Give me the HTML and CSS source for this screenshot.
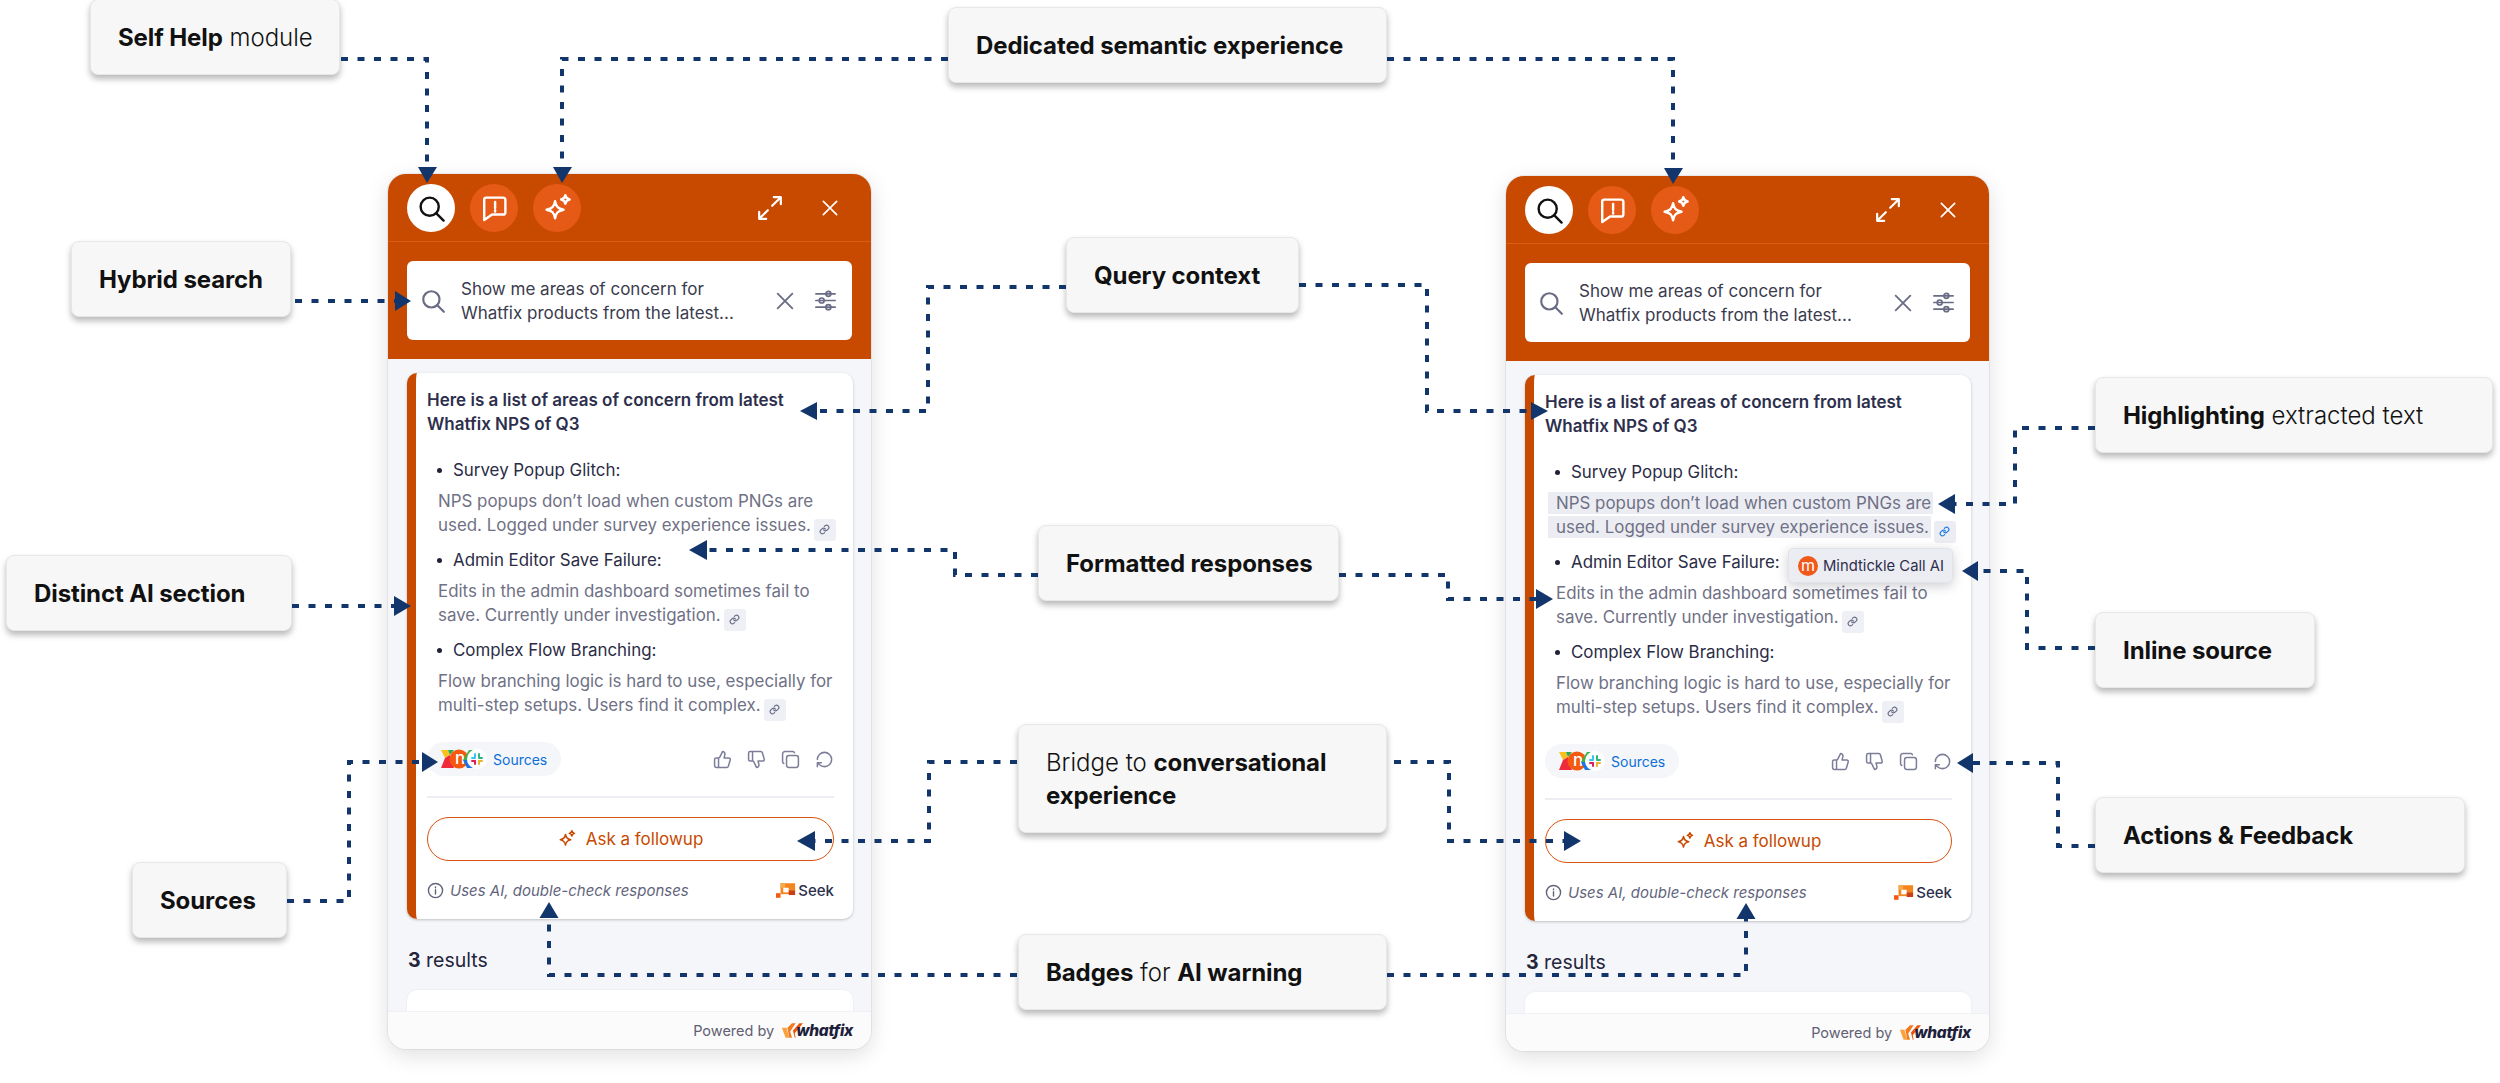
FILE: index.html
```html
<!DOCTYPE html>
<html lang="en">
<head>
    <meta charset="UTF-8">
    <meta name="viewport" content="width=device-width, initial-scale=1.0">
    <title>AI answer annotations</title>
    <link rel="stylesheet" href="styles.css">
</head>
<body>

<!-- shared icons -->
<svg class="icon-defs" aria-hidden="true">
    <symbol id="i-search" viewBox="0 0 24 24"><circle cx="10.5" cy="10.5" r="7.5"/><path d="M16 16l6 6"/></symbol>
    <symbol id="i-bubble" viewBox="0 0 24 24"><path d="M5 3h14a2 2 0 0 1 2 2v10a2 2 0 0 1-2 2H10l-6.500 4.500V4.500A1.500 1.500 0 0 1 5 3z"/><path d="M12.500 6.500v5M12.500 13.500v1"/></symbol>
    <symbol id="i-spark" viewBox="0 0 24 24"><path d="M10 6c.8 4.500 2.500 6.200 7 7-4.500.8-6.200 2.500-7 7-.8-4.500-2.500-6.200-7-7 4.500-.8 6.200-2.500 7-7z"/><path class="solid" d="M18.500 1c.4 2.200 1.300 3.100 3.500 3.500-2.200.4-3.100 1.300-3.500 3.500-.4-2.200-1.300-3.100-3.500-3.500 2.200-.4 3.100-1.300 3.500-3.500z"/></symbol>
    <symbol id="i-expand" viewBox="0 0 24 24"><path d="M14 10l8-8M15.500 2H22v6.500M10 14l-8 8M2 15.500V22h6.500"/></symbol>
    <symbol id="i-close" viewBox="0 0 24 24"><path d="M4 4l16 16M20 4L4 20"/></symbol>
    <symbol id="i-filter" viewBox="0 0 24 24"><path d="M2 5h20M2 12h20M2 19h20"/><circle class="hole" cx="15" cy="5" r="2.600"/><circle class="hole" cx="8" cy="12" r="2.600"/><circle class="hole" cx="15" cy="19" r="2.600"/></symbol>
    <symbol id="i-link" viewBox="0 0 24 24"><path d="M10 13a5 5 0 0 0 7.500.5l3-3a5 5 0 0 0-7-7l-1.700 1.700M14 11a5 5 0 0 0-7.500-.5l-3 3a5 5 0 0 0 7 7l1.700-1.700"/></symbol>
    <symbol id="i-up" viewBox="0 0 24 24"><path d="M7 10v12M15 5.900L14 10h5.800a2 2 0 0 1 1.900 2.600l-2.300 8a2 2 0 0 1-1.900 1.400H4a2 2 0 0 1-2-2v-8a2 2 0 0 1 2-2h2.800a2 2 0 0 0 1.800-1.100L12 2a3.100 3.100 0 0 1 3 3.900z"/></symbol>
    <symbol id="i-down" viewBox="0 0 24 24"><path transform="matrix(1 0 0 -1 0 24)" d="M7 10v12M15 5.900L14 10h5.800a2 2 0 0 1 1.900 2.600l-2.300 8a2 2 0 0 1-1.900 1.400H4a2 2 0 0 1-2-2v-8a2 2 0 0 1 2-2h2.800a2 2 0 0 0 1.800-1.100L12 2a3.100 3.100 0 0 1 3 3.900z"/></symbol>
    <symbol id="i-copy" viewBox="0 0 24 24"><rect x="7" y="7" width="15" height="15" rx="3"/><path d="M17 3.500A2.500 2.500 0 0 0 15 2H5a3 3 0 0 0-3 3v10a2.500 2.500 0 0 0 1.500 2"/></symbol>
    <symbol id="i-redo" viewBox="0 0 24 24"><path transform="matrix(1 0 0 -1 0 24)" d="M3 12a9 9 0 1 0 9-9 9.800 9.800 0 0 0-6.700 2.700L3 8M3 3v5h5"/></symbol>
    <symbol id="i-info" viewBox="0 0 24 24"><circle cx="12" cy="12" r="10"/><path d="M12 11v6M12 7v1"/></symbol>
    <symbol id="i-sources" viewBox="0 0 46 20">
        <polygon fill="#f7c21e" points="0,1 7,1 9,6 4,9"/>
        <polygon fill="#ee2b3b" points="0,19 4,9 9,6 13,19"/>
        <polygon fill="#2fa84f" points="7,1 13,1 9,6"/>
        <circle cx="18" cy="10" r="9.500" fill="#f4590f"/>
        <text class="src-n" x="19" y="15" text-anchor="middle">n</text>
        <polygon fill="#37b24d" points="35,1 28,1 22,11 27,11"/>
        <polygon fill="#1b74e4" points="22,11 27,11 33,19 26,19"/>
        <circle cx="36" cy="10" r="10" fill="#fff"/>
        <rect x="30" y="8" width="5" height="2" rx="1" fill="#36c5f0"/><rect x="33" y="4" width="2" height="5" rx="1" fill="#36c5f0"/>
        <rect x="37" y="4" width="2" height="5" rx="1" fill="#2eb67d"/><rect x="37" y="8" width="5" height="2" rx="1" fill="#2eb67d"/>
        <rect x="37" y="11" width="5" height="2" rx="1" fill="#ecb22e"/><rect x="37" y="11" width="2" height="5" rx="1" fill="#ecb22e"/>
        <rect x="33" y="11" width="2" height="5" rx="1" fill="#e01e5a"/><rect x="30" y="11" width="5" height="2" rx="1" fill="#e01e5a"/>
    </symbol>
    <symbol id="i-seek" viewBox="0 0 22 16">
        <rect x="5" y="0" width="16" height="12" fill="#f4861f"/>
        <rect x="5" y="0" width="5" height="5" fill="#f9a84a"/>
        <rect x="8" y="5" width="6" height="5" fill="#fff"/>
        <rect x="14" y="8" width="7" height="5" fill="#c8401a"/>
        <rect x="0" y="11" width="5" height="5" fill="#f4590f"/>
    </symbol>
    <symbol id="i-wf" viewBox="0 0 24 18">
        <path d="M1 6h5l3 11H5z" fill="#f9a13a"/>
        <path d="M7 6l5-5h4l-6 9 2 7H9z" fill="#f47a1f"/>
        <path d="M13 9l7-8h4l-9 11 1 5h-1z" fill="#e8590c"/>
    </symbol>
</svg>

<div class="canvas">

    <!-- callouts -->
    <div class="note note-selfhelp"><p><b>Self Help</b> module</p></div>
    <div class="note note-dedicated"><p><b>Dedicated semantic experience</b></p></div>
    <div class="note note-hybrid"><p><b>Hybrid search</b></p></div>
    <div class="note note-query"><p><b>Query context</b></p></div>
    <div class="note note-distinct"><p><b>Distinct AI section</b></p></div>
    <div class="note note-formatted"><p><b>Formatted responses</b></p></div>
    <div class="note note-bridge"><p>Bridge to <b>conversational</b><br><b>experience</b></p></div>
    <div class="note note-sources"><p><b>Sources</b></p></div>
    <div class="note note-badges"><p><b>Badges</b> for <b>AI warning</b></p></div>
    <div class="note note-highlight"><p><b>Highlighting</b> extracted text</p></div>
    <div class="note note-inline"><p><b>Inline source</b></p></div>
    <div class="note note-actions"><p><b>Actions &amp; Feedback</b></p></div>

    <!-- left widget -->
    <section class="panel panel-left">
        <div class="panel-nav">
            <span class="tab tab-active"><svg class="ico"><use href="#i-search"/></svg></span>
            <span class="tab"><svg class="ico"><use href="#i-bubble"/></svg></span>
            <span class="tab"><svg class="ico"><use href="#i-spark"/></svg></span>
            <span class="nav-right">
                <svg class="ico ico-expand"><use href="#i-expand"/></svg>
                <svg class="ico ico-close"><use href="#i-close"/></svg>
            </span>
        </div>
        <div class="panel-search">
            <div class="search-box">
                <svg class="ico ico-find"><use href="#i-search"/></svg>
                <p class="query">Show me areas of concern for<br>Whatfix products from the latest...</p>
                <svg class="ico ico-clear"><use href="#i-close"/></svg>
                <svg class="ico ico-filter"><use href="#i-filter"/></svg>
            </div>
        </div>
        <div class="answer">
            <h2 class="answer-title">Here is a list of areas of concern from latest<br>Whatfix NPS of Q3</h2>
            <ul class="answer-list">
                <li>
                    <h3>Survey Popup Glitch:</h3>
                    <p>NPS popups don’t load when custom PNGs are<br>used. Logged under survey experience issues.<span class="chip"><svg class="ico"><use href="#i-link"/></svg></span></p>
                </li>
                <li>
                    <h3>Admin Editor Save Failure:</h3>
                    <p>Edits in the admin dashboard sometimes fail to<br>save. Currently under investigation.<span class="chip"><svg class="ico"><use href="#i-link"/></svg></span></p>
                </li>
                <li>
                    <h3>Complex Flow Branching:</h3>
                    <p>Flow branching logic is hard to use, especially for<br>multi-step setups. Users find it complex.<span class="chip"><svg class="ico"><use href="#i-link"/></svg></span></p>
                </li>
            </ul>
            <div class="answer-tools">
                <span class="sources-pill"><svg class="src-logos"><use href="#i-sources"/></svg>Sources</span>
                <span class="tools">
                    <svg class="ico"><use href="#i-up"/></svg>
                    <svg class="ico"><use href="#i-down"/></svg>
                    <svg class="ico"><use href="#i-copy"/></svg>
                    <svg class="ico"><use href="#i-redo"/></svg>
                </span>
            </div>
            <hr class="answer-line">
            <button class="followup"><svg class="ico"><use href="#i-spark"/></svg>Ask a followup</button>
            <div class="answer-foot">
                <svg class="ico ico-info"><use href="#i-info"/></svg>
                <em>Uses AI, double-check responses</em>
                <span class="seek"><svg class="seek-logo"><use href="#i-seek"/></svg>Seek</span>
            </div>
        </div>
        <p class="results"><b>3</b> results</p>
        <div class="result-stub"></div>
        <div class="panel-foot">Powered by<span class="wf"><svg class="wf-logo"><use href="#i-wf"/></svg><i>whatfix</i></span></div>
    </section>

    <!-- right widget, same thing with the highlight and source popup open -->
    <section class="panel panel-right">
        <div class="panel-nav">
            <span class="tab tab-active"><svg class="ico"><use href="#i-search"/></svg></span>
            <span class="tab"><svg class="ico"><use href="#i-bubble"/></svg></span>
            <span class="tab"><svg class="ico"><use href="#i-spark"/></svg></span>
            <span class="nav-right">
                <svg class="ico ico-expand"><use href="#i-expand"/></svg>
                <svg class="ico ico-close"><use href="#i-close"/></svg>
            </span>
        </div>
        <div class="panel-search">
            <div class="search-box">
                <svg class="ico ico-find"><use href="#i-search"/></svg>
                <p class="query">Show me areas of concern for<br>Whatfix products from the latest...</p>
                <svg class="ico ico-clear"><use href="#i-close"/></svg>
                <svg class="ico ico-filter"><use href="#i-filter"/></svg>
            </div>
        </div>
        <div class="answer">
            <h2 class="answer-title">Here is a list of areas of concern from latest<br>Whatfix NPS of Q3</h2>
            <ul class="answer-list">
                <li>
                    <h3>Survey Popup Glitch:</h3>
                    <p><span class="hl">NPS popups don’t load when custom PNGs are</span><br><span class="hl">used. Logged under survey experience issues.</span><span class="chip chip-on"><svg class="ico"><use href="#i-link"/></svg></span></p>
                </li>
                <li>
                    <h3>Admin Editor Save Failure:</h3>
                    <p>Edits in the admin dashboard sometimes fail to<br>save. Currently under investigation.<span class="chip"><svg class="ico"><use href="#i-link"/></svg></span></p>
                </li>
                <li>
                    <h3>Complex Flow Branching:</h3>
                    <p>Flow branching logic is hard to use, especially for<br>multi-step setups. Users find it complex.<span class="chip"><svg class="ico"><use href="#i-link"/></svg></span></p>
                </li>
            </ul>
            <div class="answer-tools">
                <span class="sources-pill"><svg class="src-logos"><use href="#i-sources"/></svg>Sources</span>
                <span class="tools">
                    <svg class="ico"><use href="#i-up"/></svg>
                    <svg class="ico"><use href="#i-down"/></svg>
                    <svg class="ico"><use href="#i-copy"/></svg>
                    <svg class="ico"><use href="#i-redo"/></svg>
                </span>
            </div>
            <hr class="answer-line">
            <button class="followup"><svg class="ico"><use href="#i-spark"/></svg>Ask a followup</button>
            <div class="answer-foot">
                <svg class="ico ico-info"><use href="#i-info"/></svg>
                <em>Uses AI, double-check responses</em>
                <span class="seek"><svg class="seek-logo"><use href="#i-seek"/></svg>Seek</span>
            </div>
            <div class="source-pop"><span class="mt-badge">m</span>Mindtickle Call AI</div>
        </div>
        <p class="results"><b>3</b> results</p>
        <div class="result-stub"></div>
        <div class="panel-foot">Powered by<span class="wf"><svg class="wf-logo"><use href="#i-wf"/></svg><i>whatfix</i></span></div>
    </section>

    <!-- connectors -->
    <svg class="wires" viewBox="0 0 2500 1083">
        <path d="M341 59H427V170"/>
        <path d="M948 59H562V170"/>
        <path d="M1387 59H1673V172"/>
        <path d="M295 301H398"/>
        <path d="M1066 287H928V411H815"/>
        <path d="M1299 285H1427V411H1538"/>
        <path d="M292 606H398"/>
        <path d="M1038 575H955V550H705"/>
        <path d="M1339 575H1448V599H1540"/>
        <path d="M1017 762H929V841H812"/>
        <path d="M1394 762H1449V841H1568"/>
        <path d="M287 901H349V762H425"/>
        <path d="M1017 975H549V915"/>
        <path d="M1387 975H1746V917"/>
        <path d="M2095 428H2015V504H1952"/>
        <path d="M2095 648H2027V571H1975"/>
        <path d="M2095 846H2058V763H1970"/>

        <polygon points="427,183 418,167 437,167"/>
        <polygon points="562,183 553,167 572,167"/>
        <polygon points="1673,184 1664,168 1683,168"/>
        <polygon points="411,301 395,291 395,311"/>
        <polygon points="800,411 817,402 817,420"/>
        <polygon points="1548,411 1531,402 1531,420"/>
        <polygon points="411,606 394,596 394,616"/>
        <polygon points="689,550 707,540 707,560"/>
        <polygon points="1553,599 1536,589 1536,609"/>
        <polygon points="797,841 815,831 815,851"/>
        <polygon points="1581,841 1564,831 1564,851"/>
        <polygon points="438,762 422,752 422,772"/>
        <polygon points="549,902 539.500,918 558.500,918"/>
        <polygon points="1746,903 1736.500,919 1755.500,919"/>
        <polygon points="1938,504 1955,494 1955,514"/>
        <polygon points="1962,571 1978,561 1978,581"/>
        <polygon points="1957,763 1973,753 1973,773"/>
    </svg>
</div>

</body>
</html>
```

FILE: styles.css
```css
* {
  margin: 0;
  padding: 0;
  box-sizing: border-box;
}

body {
  background: #fff;
  font-family: "Inter", "Noto Sans", sans-serif;
  color: #1f2138;
  overflow: hidden;
}

.icon-defs {
  display: none;
}

.canvas {
  position: relative;
  width: 2500px;
  height: 1083px;
  overflow: hidden;
}

/* callouts, placed freely round the widgets */
.note {
  position: absolute;
  display: flex;
  align-items: center;
  height: 76px;
  padding: 0 0 0 27px;
  background: #f7f7f7;
  border: 1px solid #e7e7e7;
  border-radius: 8px;
  box-shadow: 0 4px 6px rgba(0, 0, 0, .28);
  font-size: 24px;
  font-weight: 300;
  line-height: 33px;
  color: #111;
  white-space: nowrap;
}

.note b {
  font-weight: 700;
  letter-spacing: -.1px;
}

.note-selfhelp { left: 90px; top: -1px; width: 250px; }
.note-dedicated { left: 948px; top: 7px; width: 439px; }
.note-hybrid { left: 71px; top: 241px; width: 220px; }
.note-query { left: 1066px; top: 237px; width: 233px; }
.note-distinct { left: 6px; top: 555px; width: 286px; }
.note-formatted { left: 1038px; top: 525px; width: 301px; }
.note-bridge { left: 1018px; top: 724px; width: 369px; height: 109px; }
.note-sources { left: 132px; top: 862px; width: 155px; }
.note-badges { left: 1018px; top: 934px; width: 369px; }
.note-highlight { left: 2095px; top: 377px; width: 398px; }
.note-inline { left: 2095px; top: 612px; width: 220px; }
.note-actions { left: 2095px; top: 797px; width: 370px; }

/* widget */
.panel {
  position: absolute;
  top: 174px;
  display: flex;
  flex-direction: column;
  width: 483px;
  height: 875px;
  overflow: hidden;
  background: #f5f6f9;
  border-radius: 18px;
  box-shadow: 0 0 0 1px rgba(20, 20, 60, .06), 0 6px 22px rgba(0, 0, 0, .13);
}

.panel-left { left: 388px; }
.panel-right { left: 1506px; top: 176px; }

.ico {
  display: block;
  fill: none;
  stroke: currentColor;
  stroke-width: 2;
  stroke-linecap: round;
  stroke-linejoin: round;
  flex: none;
}

.ico .solid { fill: currentColor; stroke: none; }

.panel-nav {
  display: flex;
  flex: none;
  gap: 15px;
  height: 68px;
  padding: 10px 19px 0;
  background: #c74a00;
  border-bottom: 1px solid #da5c17;
}

.tab {
  display: flex;
  align-items: center;
  justify-content: center;
  width: 48px;
  height: 48px;
  border-radius: 50%;
  background: #e55a17;
  color: #fff;
}

.tab .ico {
  width: 29px;
  height: 29px;
}

.tab-active {
  background: #fff;
  color: #111;
}

.nav-right {
  display: flex;
  align-items: center;
  gap: 37px;
  height: 48px;
  margin-left: auto;
  padding-right: 12px;
  color: #fff;
}

.ico-expand { width: 26px; height: 26px; }
.ico-close { width: 20px; height: 20px; }

.panel-search {
  flex: none;
  height: 117px;
  padding: 19px;
  background: #c74a00;
}

.search-box {
  display: flex;
  align-items: center;
  height: 79px;
  padding: 0 15px 0 13px;
  background: #fff;
  border-radius: 6px;
  color: #6a6c86;
}

.ico-find { width: 26px; height: 26px; }

.query {
  flex: 1;
  margin-left: 15px;
  font-size: 17px;
  line-height: 24px;
  color: #3a3b4e;
  white-space: nowrap;
}

.ico-clear { width: 22px; height: 22px; margin-right: 18px; }
.ico-filter { width: 23px; height: 23px; stroke-width: 1.800; }
.ico-filter .hole { fill: #fff; }

/* AI answer card */
.answer {
  position: relative;
  flex: none;
  height: 546px;
  margin: 14px 18px 0 19px;
  padding: 15px 19px 0 11px;
  background: #fff;
  border-left: 9px solid #c74a00;
  border-radius: 10px;
  box-shadow: 0 1px 3px rgba(0, 0, 0, .22);
}

.answer-title {
  font-size: 17px;
  font-weight: 600;
  line-height: 24px;
  color: #2d2f4d;
  white-space: nowrap;
}

.answer-list {
  list-style: none;
  margin-top: 22px;
}

.answer-list li + li {
  margin-top: 11px;
}

.answer-list h3 {
  position: relative;
  padding-left: 26px;
  font-size: 16.900px;
  font-weight: 400;
  line-height: 24px;
  color: #2a2c45;
}

.answer-list h3::before {
  content: "";
  position: absolute;
  left: 10px;
  top: 10px;
  width: 5px;
  height: 5px;
  border-radius: 50%;
  background: #1f2138;
}

.answer-list p {
  margin-top: 7px;
  padding-left: 11px;
  font-size: 16.900px;
  line-height: 24px;
  color: #6f7186;
  white-space: nowrap;
}

.hl {
  margin-left: -8px;
  padding: 1px 2px 1px 8px;
  background: #ecedf3;
}

.chip {
  display: inline-flex;
  align-items: center;
  justify-content: center;
  width: 22px;
  height: 22px;
  margin: -6px 0 -6px 3px;
  vertical-align: -4px;
  background: #eff0f5;
  border-radius: 3px;
  color: #6b6d88;
}

.chip .ico {
  width: 11px;
  height: 11px;
  stroke-width: 2.600;
}

.chip-on { color: #1c7ce0; background: #ecedf3; }

.answer-tools {
  display: flex;
  align-items: center;
  justify-content: space-between;
  margin-top: 25px;
}

.sources-pill {
  display: flex;
  align-items: center;
  width: 134px;
  height: 34px;
  padding-left: 14px;
  background: #f5f6f9;
  border-radius: 17px;
  font-size: 14px;
  color: #0a70d8;
}

.src-logos {
  width: 46px;
  height: 20px;
  margin-right: 6px;
}

.src-n {
  font-size: 17px;
  font-weight: 500;
  fill: #fff;
}

.tools {
  display: flex;
  gap: 15px;
  color: #7c7d99;
}

.tools .ico {
  width: 19px;
  height: 19px;
  stroke-width: 1.900;
}

.answer-line {
  height: 2px;
  margin-top: 20px;
  background: #eceef4;
  border: 0;
}

.followup {
  display: flex;
  align-items: center;
  justify-content: center;
  gap: 10px;
  width: 100%;
  height: 44px;
  margin-top: 19px;
  background: #fff;
  border: 1.500px solid #d9530f;
  border-radius: 22px;
  font: 400 17px "Inter", sans-serif;
  color: #c74a00;
}

.followup .ico {
  width: 18px;
  height: 18px;
}

.answer-foot {
  display: flex;
  align-items: center;
  height: 24px;
  margin-top: 17px;
  color: #62647c;
}

.ico-info {
  width: 17px;
  height: 17px;
  margin-right: 6px;
  stroke-width: 2;
}

.answer-foot em {
  font-size: 15px;
}

.seek {
  display: flex;
  align-items: center;
  margin-left: auto;
  font-size: 15px;
  font-weight: 500;
  color: #2d2f4d;
}

.seek-logo {
  width: 20px;
  height: 15px;
  margin-right: 2px;
}

/* popup over the answer text */
.source-pop {
  position: absolute;
  left: 254px;
  top: 173px;
  display: flex;
  align-items: center;
  gap: 5px;
  width: 165px;
  height: 35px;
  padding-left: 9px;
  background: #ecedf3;
  border: 1px solid #e2e3ea;
  border-radius: 5px;
  box-shadow: 0 3px 12px rgba(30, 30, 60, .22);
  font-size: 14.800px;
  color: #2d2f4d;
  white-space: nowrap;
}

.mt-badge {
  display: flex;
  align-items: center;
  justify-content: center;
  width: 20px;
  height: 20px;
  padding-bottom: 2px;
  border-radius: 50%;
  background: #f1591a;
  font-size: 16px;
  color: #fff;
}

.results {
  flex: none;
  margin-top: 29px;
  padding-left: 20px;
  font-size: 19.500px;
  line-height: 24px;
  color: #24253b;
}

.results b {
  font-weight: 700;
}

.result-stub {
  flex: 1;
  min-height: 0;
  margin: 18px 18px 0 19px;
  background: #fff;
  border-radius: 10px 10px 0 0;
  box-shadow: 0 0 2px rgba(0, 0, 0, .08);
}

.panel-foot {
  display: flex;
  flex: none;
  align-items: center;
  justify-content: flex-end;
  gap: 7px;
  height: 38px;
  padding-right: 18px;
  background: #fbfbfc;
  border-top: 1px solid #f0f1f5;
  font-size: 14.500px;
  color: #5f6072;
}

.wf {
  display: flex;
  align-items: center;
}

.wf-logo {
  width: 22px;
  height: 17px;
  margin-right: -7px;
}

.wf i {
  font-size: 15.500px;
  font-weight: 800;
  letter-spacing: -.3px;
  color: #1e1f3b;
}

/* dashed connectors drawn over everything */
.wires {
  position: absolute;
  left: 0;
  top: 0;
  width: 2500px;
  height: 1083px;
  pointer-events: none;
}

.wires path {
  fill: none;
  stroke: #12356b;
  stroke-width: 4;
  stroke-dasharray: 7 9.500;
}

.wires polygon {
  fill: #12356b;
}
```
